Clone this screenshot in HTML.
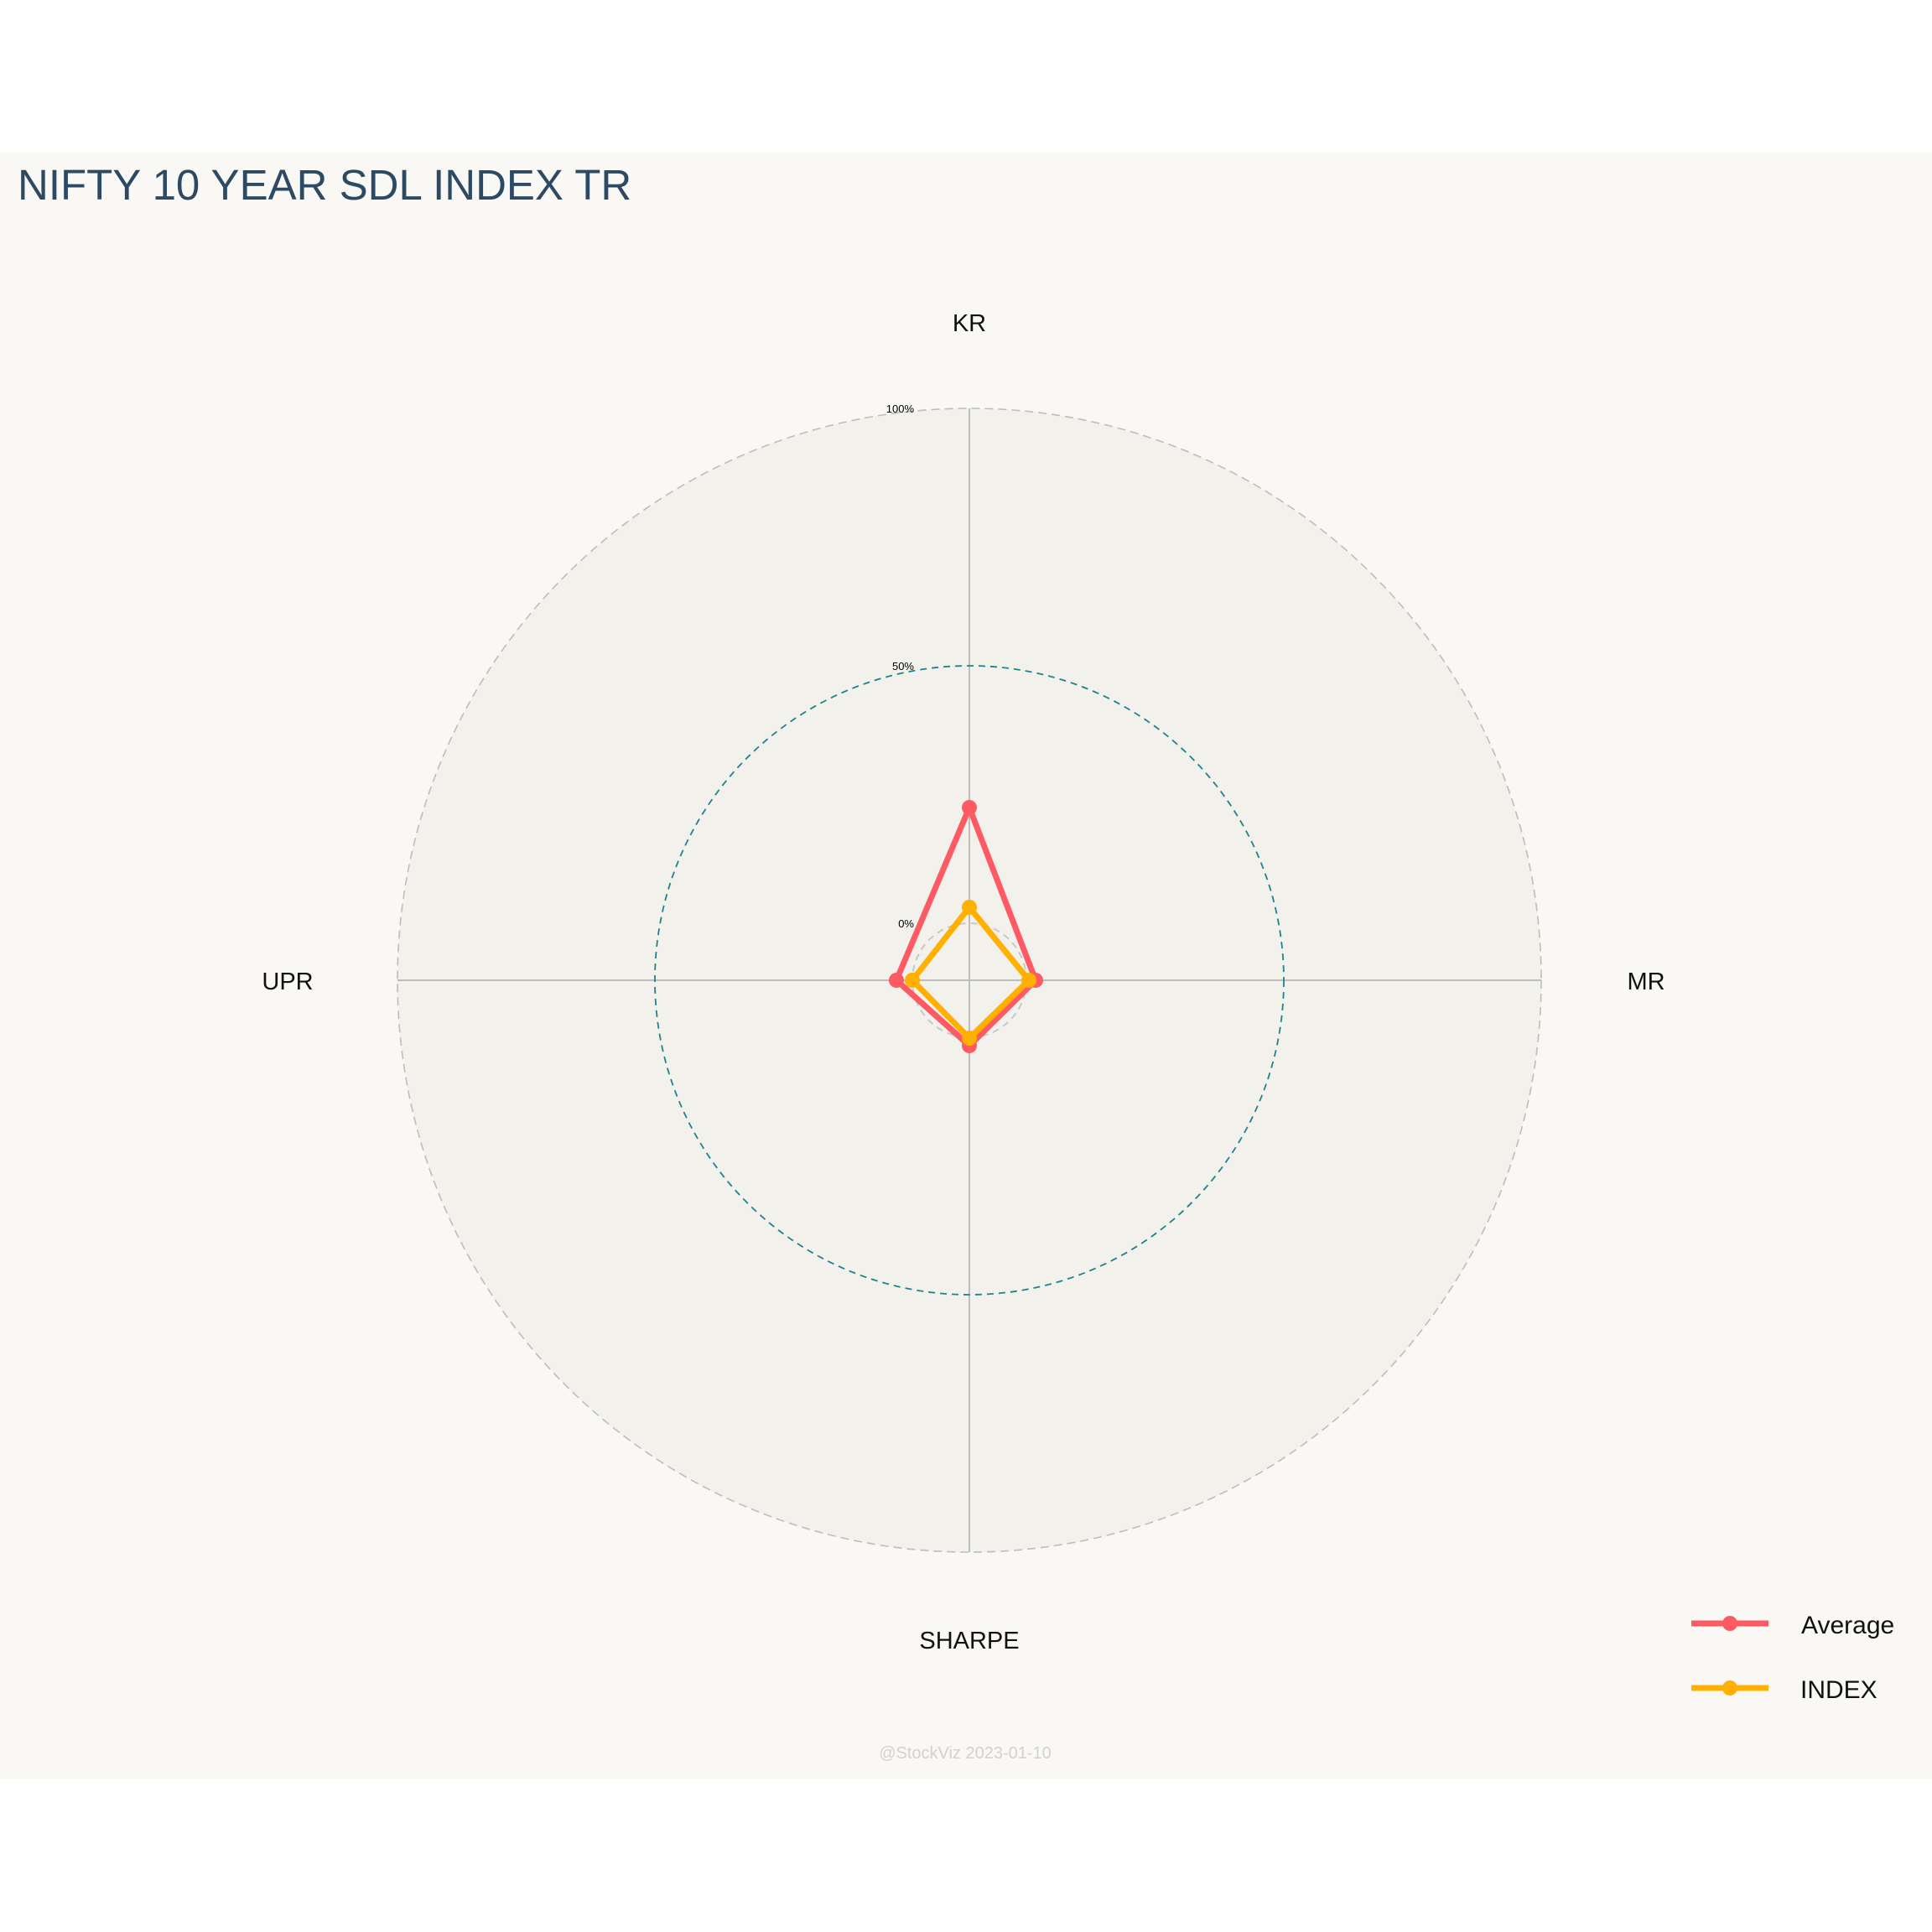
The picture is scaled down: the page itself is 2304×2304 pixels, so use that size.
<!DOCTYPE html>
<html><head><meta charset="utf-8"><style>
html,body{margin:0;padding:0;background:#fff;}
svg{display:block}
text{font-family:"Liberation Sans",sans-serif;}
</style></head><body>
<svg width="2304" height="2304" viewBox="0 0 2304 2304" xmlns="http://www.w3.org/2000/svg">
<rect x="0" y="0" width="2304" height="2304" fill="#fefefe"/>
<rect x="0" y="182" width="2304" height="1939" fill="#f9f8f4"/>
<text x="21" y="238" font-size="51" fill="#2c4a63">NIFTY 10 YEAR SDL INDEX TR</text>
<circle cx="1156" cy="1169" r="682" fill="#f2f1ec" stroke="#bdbdbd" stroke-width="1.6" stroke-dasharray="10,6"/>
<line x1="474" y1="1169" x2="1838" y2="1169" stroke="#bdbdbd" stroke-width="2"/>
<line x1="1156" y1="487" x2="1156" y2="1851" stroke="#bdbdbd" stroke-width="2"/>
<circle cx="1156" cy="1169" r="375" fill="none" stroke="#1f8290" stroke-width="1.8" stroke-dasharray="8,6"/>
<circle cx="1156" cy="1169" r="68" fill="none" stroke="#c8c8c8" stroke-width="2" stroke-dasharray="8,6"/>
<text x="1090" y="492" font-size="13" fill="#000" text-anchor="end">100%</text>
<text x="1090" y="799" font-size="13" fill="#000" text-anchor="end">50%</text>
<text x="1090" y="1106" font-size="13" fill="#000" text-anchor="end">0%</text>
<text x="1156" y="395" font-size="29" fill="#111" text-anchor="middle">KR</text>
<text x="1963" y="1180" font-size="29" fill="#111" text-anchor="middle">MR</text>
<text x="343" y="1180" font-size="29" fill="#111" text-anchor="middle">UPR</text>
<text x="1156" y="1966" font-size="29" fill="#111" text-anchor="middle">SHARPE</text>
<g stroke="#fe5a64" stroke-width="7" fill="none" stroke-linejoin="round">
<polygon points="1156,963 1235,1169 1156,1247 1069,1169"/>
</g>
<g fill="#fe5a64">
<circle cx="1156" cy="963" r="9"/><circle cx="1235" cy="1169" r="9"/><circle cx="1156" cy="1247" r="9"/><circle cx="1069" cy="1169" r="9"/>
</g>
<g stroke="#ffb000" stroke-width="7" fill="none" stroke-linejoin="round">
<polygon points="1156,1082 1227,1169 1156,1238 1088,1169"/>
</g>
<g fill="#ffb000">
<circle cx="1156" cy="1082" r="9"/><circle cx="1227" cy="1169" r="9"/><circle cx="1156" cy="1238" r="9"/><circle cx="1088" cy="1169" r="9"/>
</g>
<line x1="2017" y1="1936" x2="2109" y2="1936" stroke="#fe5a64" stroke-width="7"/>
<circle cx="2063" cy="1936" r="9" fill="#fe5a64"/>
<text x="2148" y="1948" font-size="30" fill="#111">Average</text>
<line x1="2017" y1="2013" x2="2109" y2="2013" stroke="#ffb000" stroke-width="7"/>
<circle cx="2063" cy="2013" r="9" fill="#ffb000"/>
<text x="2147" y="2025" font-size="30" fill="#111">INDEX</text>
<text x="1151" y="2097" font-size="20" fill="#d2d1ce" text-anchor="middle">@StockViz 2023-01-10</text>
</svg>
</body></html>
